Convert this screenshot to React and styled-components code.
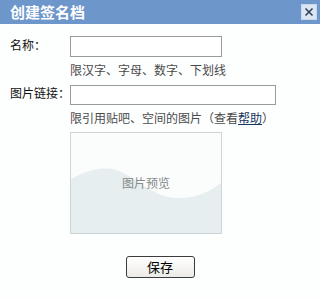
import React from "react";
import styled, { createGlobalStyle } from "styled-components";

const Global = createGlobalStyle`
  html, body { margin: 0; padding: 0; background: #ffffff; }
  body { font-family: "Noto Sans CJK SC", "Liberation Sans", sans-serif; }
`;

const Dialog = styled.div`
  width: 320px;
  height: 300px;
  background: #fdfefe;
  display: flex;
  flex-direction: column;
`;

const TitleBar = styled.div`
  height: 24px;
  background: #6d97cb;
  display: flex;
  align-items: center;
  justify-content: space-between;
  padding: 0 3px 0 10px;
`;

const Title = styled.div`
  color: #ffffff;
  font-size: 15px;
  font-weight: bold;
  line-height: 24px;
`;

const CloseBtn = styled.button`
  width: 16px;
  height: 16px;
  padding: 0;
  border: 1px solid #c9d8ec;
  background: #dbe6f4;
  display: flex;
  align-items: center;
  justify-content: center;
  cursor: pointer;
`;

const Body = styled.div`
  padding: 12px 0 0 10px;
  display: flex;
  flex-direction: column;
`;

const Row = styled.div`
  display: grid;
  grid-template-columns: 60px 1fr;
  margin-top: ${(p) => p.$top || 0}px;
`;

const Label = styled.div`
  font-size: 12px;
  line-height: 14px;
  padding-top: ${(p) => p.$pt || 0}px;
  color: #111;
  white-space: nowrap;
`;

const Field = styled.div`
  display: flex;
  flex-direction: column;
`;

const Input = styled.input`
  box-sizing: border-box;
  width: ${(p) => p.$w}px;
  height: ${(p) => p.$h}px;
  border: 1px solid #9a9a9a;
  background: #fff;
  margin: 0;
  padding: 0 3px;
  outline: none;
`;

const Hint = styled.div`
  font-size: 12px;
  line-height: 18px;
  margin-top: 4px;
  color: #4a4a4a;
  white-space: nowrap;
`;

const HelpLink = styled.a`
  color: #16365e;
  text-decoration: underline;
`;

const Preview = styled.div`
  position: relative;
  box-sizing: border-box;
  width: 152px;
  height: 102px;
  margin-top: 5px;
  border: 1px solid #cdd5d8;
  background: #fbfcfc;
  display: flex;
  align-items: center;
  justify-content: center;
  overflow: hidden;
`;

const Wave = styled.svg`
  position: absolute;
  left: 0;
  top: 0;
`;

const PreviewText = styled.span`
  position: relative;
  font-size: 12px;
  color: #858a8b;
  margin-top: -2px;
`;

const Footer = styled.div`
  display: flex;
  justify-content: center;
  padding-right: 10px;
  margin-top: 22px;
`;

const SaveBtn = styled.button`
  box-sizing: border-box;
  width: 69px;
  height: 22px;
  border: 1px solid #3c3c3c;
  border-radius: 3px;
  background: linear-gradient(#ffffff, #ecebe6);
  font-family: "Noto Sans CJK SC", sans-serif;
  font-size: 13px;
  line-height: 18px;
  color: #000;
  padding: 0;
  cursor: pointer;
`;

export default function App() {
  return (
    <>
      <Global />
      <Dialog>
        <TitleBar>
          <Title>创建签名档</Title>
          <CloseBtn aria-label="关闭">
            <svg width="10" height="10" viewBox="0 0 10 10">
              <path d="M1.5 1.5 L8.5 8.5 M8.5 1.5 L1.5 8.5" stroke="#34435a" strokeWidth="1.6" />
            </svg>
          </CloseBtn>
        </TitleBar>
        <Body>
          <Row>
            <Label $pt={2}>名称：</Label>
            <Field>
              <Input $w={152} $h={21} />
              <Hint>限汉字、字母、数字、下划线</Hint>
            </Field>
          </Row>
          <Row $top={6}>
            <Label $pt={1}>图片链接：</Label>
            <Field>
              <Input $w={206} $h={20} />
              <Hint>
                限引用贴吧、空间的图片（查看<HelpLink href="#">帮助</HelpLink>）
              </Hint>
              <Preview>
                <Wave width="150" height="100" viewBox="0 0 150 100">
                  <path
                    d="M0 46 C 15 38, 30 33, 45 37 C 65 43, 80 64, 105 65 C 125 66, 140 58, 150 50 L150 100 L0 100 Z"
                    fill="#e7eef0"
                  />
                </Wave>
                <PreviewText>图片预览</PreviewText>
              </Preview>
            </Field>
          </Row>
          <Footer>
            <SaveBtn>保存</SaveBtn>
          </Footer>
        </Body>
      </Dialog>
    </>
  );
}
